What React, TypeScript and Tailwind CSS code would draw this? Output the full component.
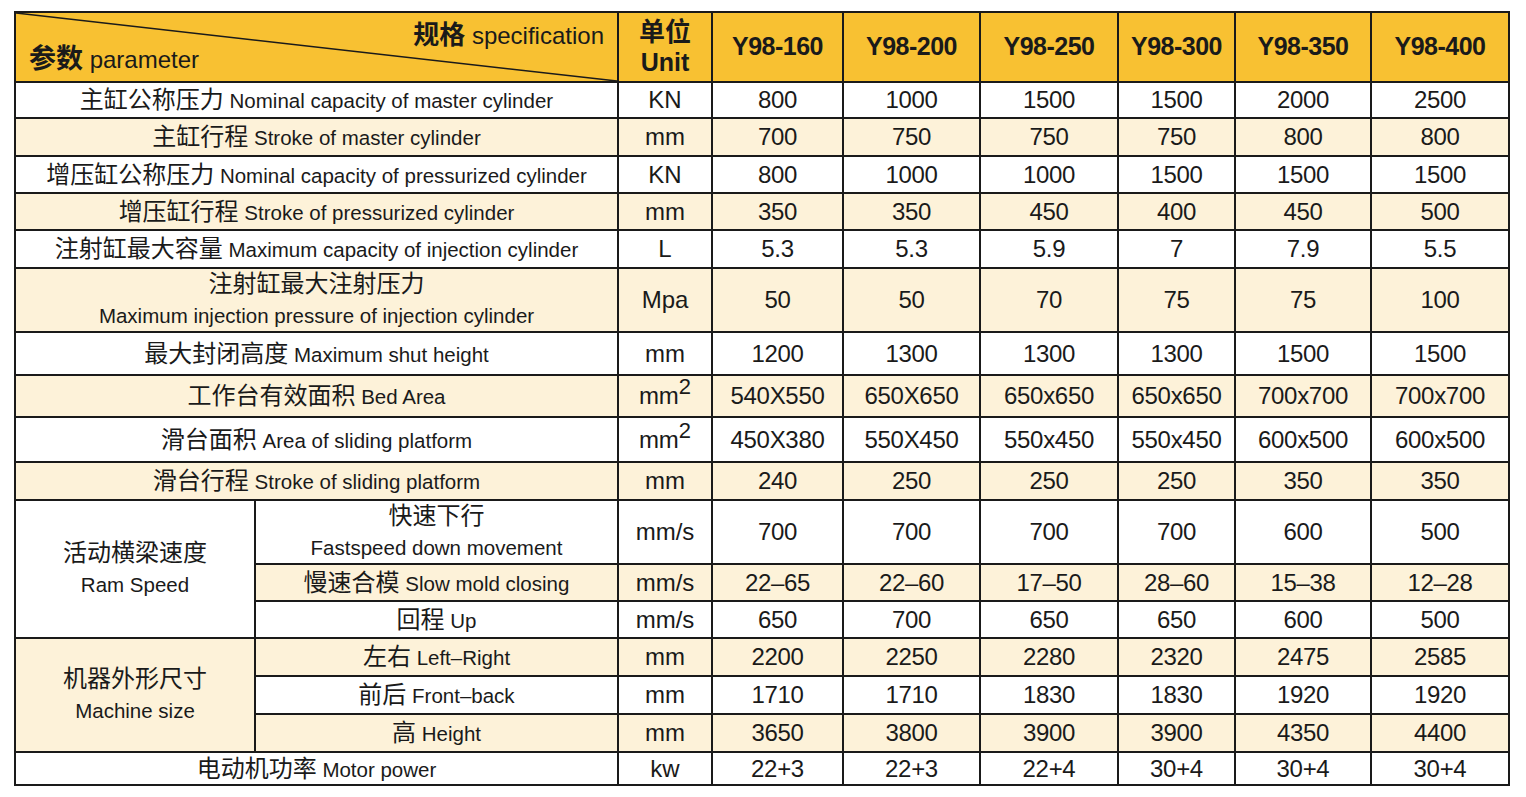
import type { ReactNode } from 'react';

const MODELS = ['Y98-160', 'Y98-200', 'Y98-250', 'Y98-300', 'Y98-350', 'Y98-400'];

type Row = {
  zh: string;
  en: string;
  unit: ReactNode;
  values: string[];
  cream?: boolean;
  stacked?: boolean;
};

const MM2 = (
  <span>
    mm<span className="relative -top-[10px] text-[22px] leading-none">2</span>
  </span>
);

const ROWS: Row[] = [
  { zh: '主缸公称压力', en: 'Nominal capacity of master cylinder', unit: 'KN', values: ['800', '1000', '1500', '1500', '2000', '2500'] },
  { zh: '主缸行程', en: 'Stroke of master cylinder', unit: 'mm', values: ['700', '750', '750', '750', '800', '800'], cream: true },
  { zh: '增压缸公称压力', en: 'Nominal capacity of pressurized cylinder', unit: 'KN', values: ['800', '1000', '1000', '1500', '1500', '1500'] },
  { zh: '增压缸行程', en: 'Stroke of pressurized cylinder', unit: 'mm', values: ['350', '350', '450', '400', '450', '500'], cream: true },
  { zh: '注射缸最大容量', en: 'Maximum capacity of injection cylinder', unit: 'L', values: ['5.3', '5.3', '5.9', '7', '7.9', '5.5'] },
  { zh: '注射缸最大注射压力', en: 'Maximum injection pressure of injection cylinder', unit: 'Mpa', values: ['50', '50', '70', '75', '75', '100'], cream: true, stacked: true },
  { zh: '最大封闭高度', en: 'Maximum shut height', unit: 'mm', values: ['1200', '1300', '1300', '1300', '1500', '1500'] },
  { zh: '工作台有效面积', en: 'Bed Area', unit: MM2, values: ['540X550', '650X650', '650x650', '650x650', '700x700', '700x700'], cream: true },
  { zh: '滑台面积', en: 'Area of sliding platform', unit: MM2, values: ['450X380', '550X450', '550x450', '550x450', '600x500', '600x500'] },
  { zh: '滑台行程', en: 'Stroke of sliding platform', unit: 'mm', values: ['240', '250', '250', '250', '350', '350'], cream: true },
];

const RAM_ROWS: Row[] = [
  { zh: '快速下行', en: 'Fastspeed down movement', unit: 'mm/s', values: ['700', '700', '700', '700', '600', '500'], stacked: true },
  { zh: '慢速合模', en: 'Slow mold closing', unit: 'mm/s', values: ['22–65', '22–60', '17–50', '28–60', '15–38', '12–28'], cream: true },
  { zh: '回程', en: 'Up', unit: 'mm/s', values: ['650', '700', '650', '650', '600', '500'] },
];

const SIZE_ROWS: Row[] = [
  { zh: '左右', en: 'Left–Right', unit: 'mm', values: ['2200', '2250', '2280', '2320', '2475', '2585'], cream: true },
  { zh: '前后', en: 'Front–back', unit: 'mm', values: ['1710', '1710', '1830', '1830', '1920', '1920'] },
  { zh: '高', en: 'Height', unit: 'mm', values: ['3650', '3800', '3900', '3900', '4350', '4400'], cream: true },
];

const MOTOR: Row = { zh: '电动机功率', en: 'Motor power', unit: 'kw', values: ['22+3', '22+3', '22+4', '30+4', '30+4', '30+4'] };

const cell = 'border-r-2 border-b-2 border-[#1a1a1a] flex items-center justify-center';

function Label({ row }: { row: Row }) {
  if (row.stacked) {
    return (
      <div className="flex flex-col items-center leading-[32px]">
        <span className="text-[24px]">{row.zh}</span>
        <span className="text-[20.5px]">{row.en}</span>
      </div>
    );
  }
  return (
    <span className="text-[20.5px] whitespace-nowrap">
      <span className="text-[24px]">{row.zh}</span> {row.en}
    </span>
  );
}

function RowCells({ row, span }: { row: Row; span: boolean }) {
  const bg = row.cream ? 'bg-[#fdf2d9]' : 'bg-white';
  return (
    <>
      <div className={`${cell} ${bg} ${span ? 'col-span-2' : ''}`}>
        <Label row={row} />
      </div>
      <div className={`${cell} ${bg} text-[24px]`}>{row.unit}</div>
      {row.values.map((v, i) => (
        <div key={i} className={`${cell} ${bg} text-[24px] tracking-[-0.3px]`}>
          {v}
        </div>
      ))}
    </>
  );
}

export default function App() {
  return (
    <div className="min-h-[797px] bg-white pt-[11px] pl-[14px] text-[#1a1a1a] font-['Liberation_Sans','Noto_Sans_CJK_SC',sans-serif]">
      <div className="grid w-[1496px] grid-cols-[240px_363px_94px_131px_137px_138px_117px_136px_138px] grid-rows-[70px_36px_38px_37px_37px_38px_64px_43px_42px_45px_38px_64px_37px_37px_38px_38px_38px_33px] border-t-2 border-l-2 border-[#1a1a1a]">
        {/* header */}
        <div className="col-span-2 relative border-r-2 border-b-2 border-[#1a1a1a] bg-[#f8c132]">
          <svg className="absolute inset-0 h-full w-full" viewBox="0 0 100 100" preserveAspectRatio="none">
            <line x1="0" y1="0" x2="100" y2="100" stroke="#1a1a1a" strokeWidth="1.5" vectorEffect="non-scaling-stroke" />
          </svg>
          <div className="absolute right-[13px] top-[3px] text-[24px]">
            <span className="font-bold text-[26px]">规格</span> specification
          </div>
          <div className="absolute left-[13px] bottom-[2px] text-[24px]">
            <span className="font-bold text-[27px]">参数</span> parameter
          </div>
        </div>
        <div className={`${cell} bg-[#f8c132] flex-col font-bold leading-[30px]`}>
          <span className="text-[26px]">单位</span>
          <span className="text-[25px]">Unit</span>
        </div>
        {MODELS.map((m) => (
          <div key={m} className={`${cell} bg-[#f8c132] text-[25px] font-bold tracking-[-0.5px]`}>
            {m}
          </div>
        ))}

        {ROWS.map((r) => (
          <RowCells key={r.zh} row={r} span />
        ))}

        <div className={`${cell} row-span-3 bg-white flex-col leading-[32px]`}>
          <span className="text-[24px]">活动横梁速度</span>
          <span className="text-[20.5px]">Ram Speed</span>
        </div>
        {RAM_ROWS.map((r) => (
          <RowCells key={r.zh} row={r} span={false} />
        ))}

        <div className={`${cell} row-span-3 bg-[#fdf2d9] flex-col leading-[32px]`}>
          <span className="text-[24px]">机器外形尺寸</span>
          <span className="text-[20.5px]">Machine size</span>
        </div>
        {SIZE_ROWS.map((r) => (
          <RowCells key={r.zh} row={r} span={false} />
        ))}

        <RowCells row={MOTOR} span />
      </div>
    </div>
  );
}
